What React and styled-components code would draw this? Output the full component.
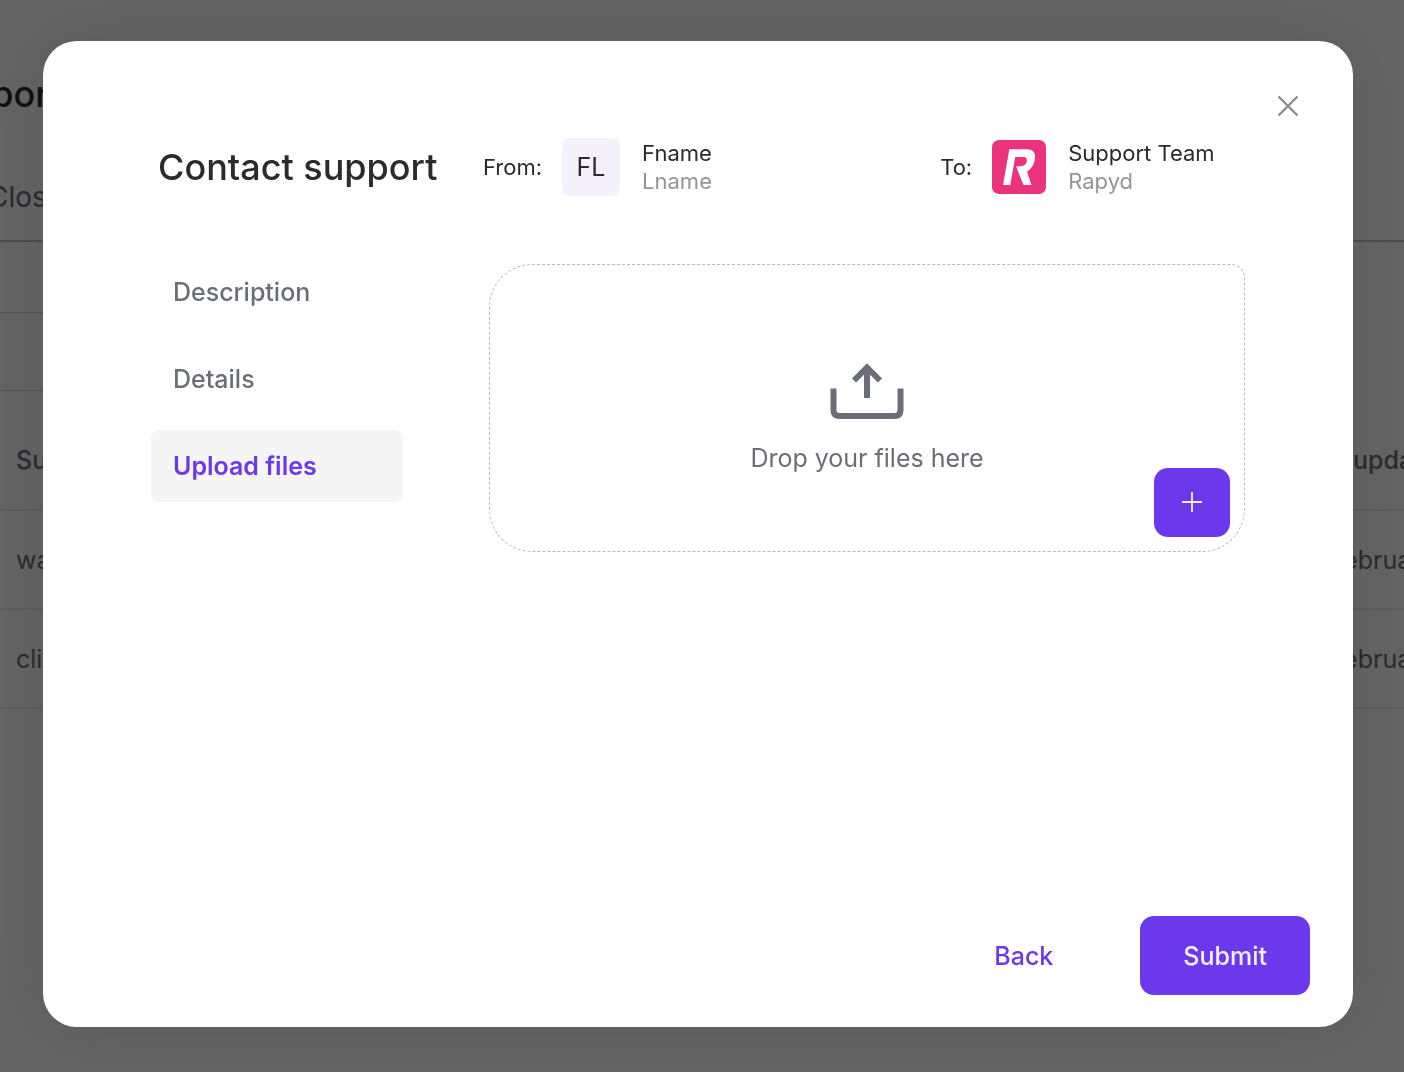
import React, { useState } from "react";
import styled, { createGlobalStyle, css } from "styled-components";

const GlobalStyle = createGlobalStyle`
  * {
    box-sizing: border-box;
  }

  body {
    margin: 0;
    background-color: #fff;
    color: #2b2b2b;
    font-family: Inter, "Liberation Sans", sans-serif;
  }

  button {
    border: none;
    background: none;
    padding: 0;
    font-family: inherit;
    cursor: pointer;
  }
`;

/* page behind the dialog */

const Viewport = styled.div`
  height: 100vh;
  overflow: hidden;
`;

const Page = styled.main`
  margin: 0 -88px;
  padding-top: 71px;
`;

const PageTitle = styled.h1`
  margin: 0;
  padding-left: 12px;
  font-size: 36px;
  font-weight: 500;
  line-height: 46px;
`;

const Tabs = styled.div`
  display: flex;
  gap: 40px;
  height: 125px;
  padding: 57px 0 0 76px;
  border-bottom: 2px solid #c4c4c4;
`;

const Tab = styled.button`
  align-self: flex-start;
  font-size: 28px;
  line-height: 46px;
  color: #6b6e76;
`;

const Filters = styled.div`
  width: 50%;
  height: 79px;
  margin-top: 70px;
  border: 1px solid #d2d2d2;
`;

const Table = styled.table`
  width: 100%;
  margin-top: 20px;
  border-collapse: collapse;
  color: #6b6e76;
  font-size: 25px;
  text-align: left;

  th,
  td {
    height: 99px;
    padding: 0 0 0 104px;
    border-bottom: 2px solid #ececec;
    font-weight: 400;
  }

  th {
    font-weight: 500;
  }

  th:last-child,
  td:last-child {
    width: 196px;
    padding: 0;
    white-space: nowrap;
  }
`;

/* dialog */

const Overlay = styled.div`
  position: fixed;
  inset: 0;
  display: flex;
  padding: 41px 51px 45px 43px;
  background-color: rgba(0, 0, 0, 0.61);
`;

const Dialog = styled.section`
  flex: 1;
  display: flex;
  flex-direction: column;
  padding: 43px 43px 32px;
  border-radius: 34px;
  background-color: #fff;
  box-shadow: 0 0 72px rgba(0, 0, 0, 0.08);
`;

const CloseButton = styled.button`
  align-self: flex-end;
  width: 44px;
  height: 44px;

  svg {
    display: block;
    margin: auto;
  }
`;

const Header = styled.header`
  display: grid;
  grid-template-columns: 332px 3fr 2fr;
  align-items: center;
  padding: 10px 65px 0;
`;

const Title = styled.h2`
  margin: 0;
  padding-left: 7px;
  font-size: 36px;
  font-weight: 500;
  line-height: 44px;
`;

const Person = styled.div`
  display: flex;
  align-items: center;
  gap: 22px;
  font-size: 22px;
  line-height: 28px;
`;

const PersonLabel = styled.span`
  margin-right: -2px;
`;

const Avatar = styled.div`
  display: flex;
  align-items: center;
  justify-content: center;
  width: 58px;
  height: 58px;
  border-radius: 8px;
  background-color: #f4f1fd;
  font-size: 25px;
`;

const Muted = styled.div`
  color: #959595;
`;

const Body = styled.div`
  flex: 1;
  display: grid;
  grid-template-columns: 252px 1fr;
  gap: 86px;
  align-items: start;
  padding: 60px 65px 0;
`;

const Steps = styled.nav`
  display: flex;
  flex-direction: column;
  gap: 15px;
`;

const Step = styled.button`
  height: 72px;
  padding: 0 22px;
  border-radius: 8px;
  font-size: 25px;
  font-weight: 500;
  text-align: left;
  color: #6b6e76;
  ${({ $active }) =>
    $active &&
    css`
      background-color: #f5f5f5;
      font-weight: 600;
      color: #6c38eb;
    `}
`;

const DropZone = styled.div`
  display: grid;
  height: 288px;
  margin-top: 8px;
  padding: 14px;
  border: 1px dashed #b9b9b9;
  border-radius: 43px 14px 43px 43px;
`;

const DropHint = styled.div`
  grid-area: 1 / 1;
  display: flex;
  flex-direction: column;
  align-items: center;
  justify-content: center;
  gap: 22px;
  padding-top: 22px;
  font-size: 25px;
  line-height: 34px;
  color: #6b6e76;
`;

const AddButton = styled.button`
  grid-area: 1 / 1;
  place-self: end;
  width: 76px;
  height: 69px;
  border-radius: 14px;
  background-color: #6c38eb;

  svg {
    display: block;
    margin: auto;
  }
`;

const Footer = styled.footer`
  display: flex;
  justify-content: flex-end;
  gap: 44px;
`;

const FooterButton = styled.button`
  height: 79px;
  padding: 0 43px;
  border-radius: 14px;
  font-size: 25px;
  font-weight: 500;
  color: ${({ $primary }) => ($primary ? "#f4f1fd" : "#6c38eb")};
  background-color: ${({ $primary }) => ($primary ? "#6c38eb" : "transparent")};
`;

const CloseIcon = () => (
  <svg width="22" height="22" viewBox="0 0 22 22" fill="none">
    <path d="M1.500 1.500L20.500 20.500M20.500 1.500L1.500 20.500" stroke="#8c8c8c" strokeWidth="2.4" />
  </svg>
);

const UploadIcon = () => (
  <svg width="74" height="56" viewBox="0 0 74 56" fill="none">
    <path
      d="M3.500 25.500V47Q3.500 53 9.500 53H64.500Q70.500 53 70.500 47V25.500M37 35V4M24 17.500L37 4.500L50 17.500"
      stroke="#6b6e76"
      strokeWidth="6"
    />
  </svg>
);

const PlusIcon = () => (
  <svg width="20" height="20" viewBox="0 1 20 20" overflow="visible" fill="none">
    <path d="M10 0V20M0 10H20" stroke="#f4f1fd" strokeWidth="1.8" />
  </svg>
);

const RapydLogo = () => (
  <svg width="54" height="54" viewBox="0 0 54 54" role="img" aria-label="Rapyd">
    <rect width="54" height="54" rx="7" fill="#eb327c" />
    <path
      fill="#fff"
      d="M17.300 9.300H35C40.500 9.300 43.600 12.500 43 18C42.500 24 39.500 29 35 31.500L39.500 45H31.500L24 26.200H28.500C32 26.200 34.500 24.500 34.800 20.500C35 18 33.800 17 31.800 17H23.200L18.300 45H11Z"
    />
  </svg>
);

const steps = ["Description", "Details", "Upload files"];

const tickets = [
  { id: 1, subject: "wallet", updated: "14 February" },
  { id: 2, subject: "client", updated: "14 February" },
];

function App() {
  const [step, setStep] = useState("Upload files");

  return (
    <>
      <GlobalStyle />
      <Viewport aria-hidden="true">
        <Page>
          <PageTitle>Support</PageTitle>
          <Tabs>
            <Tab>Closed</Tab>
          </Tabs>
          <Filters />
          <Table>
            <thead>
              <tr>
                <th>Subject</th>
                <th>Last updated</th>
              </tr>
            </thead>
            <tbody>
              {tickets.map((ticket) => (
                <tr key={ticket.id}>
                  <td>{ticket.subject}</td>
                  <td>{ticket.updated}</td>
                </tr>
              ))}
            </tbody>
          </Table>
        </Page>
      </Viewport>
      <Overlay>
        <Dialog role="dialog" aria-modal="true" aria-labelledby="dialog-title">
          <CloseButton aria-label="Close">
            <CloseIcon />
          </CloseButton>
          <Header>
            <Title id="dialog-title">Contact support</Title>
            <Person>
              <PersonLabel>From:</PersonLabel>
              <Avatar>FL</Avatar>
              <div>
                <div>Fname</div>
                <Muted>Lname</Muted>
              </div>
            </Person>
            <Person>
              <PersonLabel>To:</PersonLabel>
              <RapydLogo />
              <div>
                <div>Support Team</div>
                <Muted>Rapyd</Muted>
              </div>
            </Person>
          </Header>
          <Body>
            <Steps>
              {steps.map((name) => (
                <Step
                  key={name}
                  $active={name === step}
                  onClick={() => setStep(name)}
                >
                  {name}
                </Step>
              ))}
            </Steps>
            <DropZone>
              <DropHint>
                <UploadIcon />
                Drop your files here
              </DropHint>
              <AddButton aria-label="Add files">
                <PlusIcon />
              </AddButton>
            </DropZone>
          </Body>
          <Footer>
            <FooterButton>Back</FooterButton>
            <FooterButton $primary>Submit</FooterButton>
          </Footer>
        </Dialog>
      </Overlay>
    </>
  );
}

export default App;
